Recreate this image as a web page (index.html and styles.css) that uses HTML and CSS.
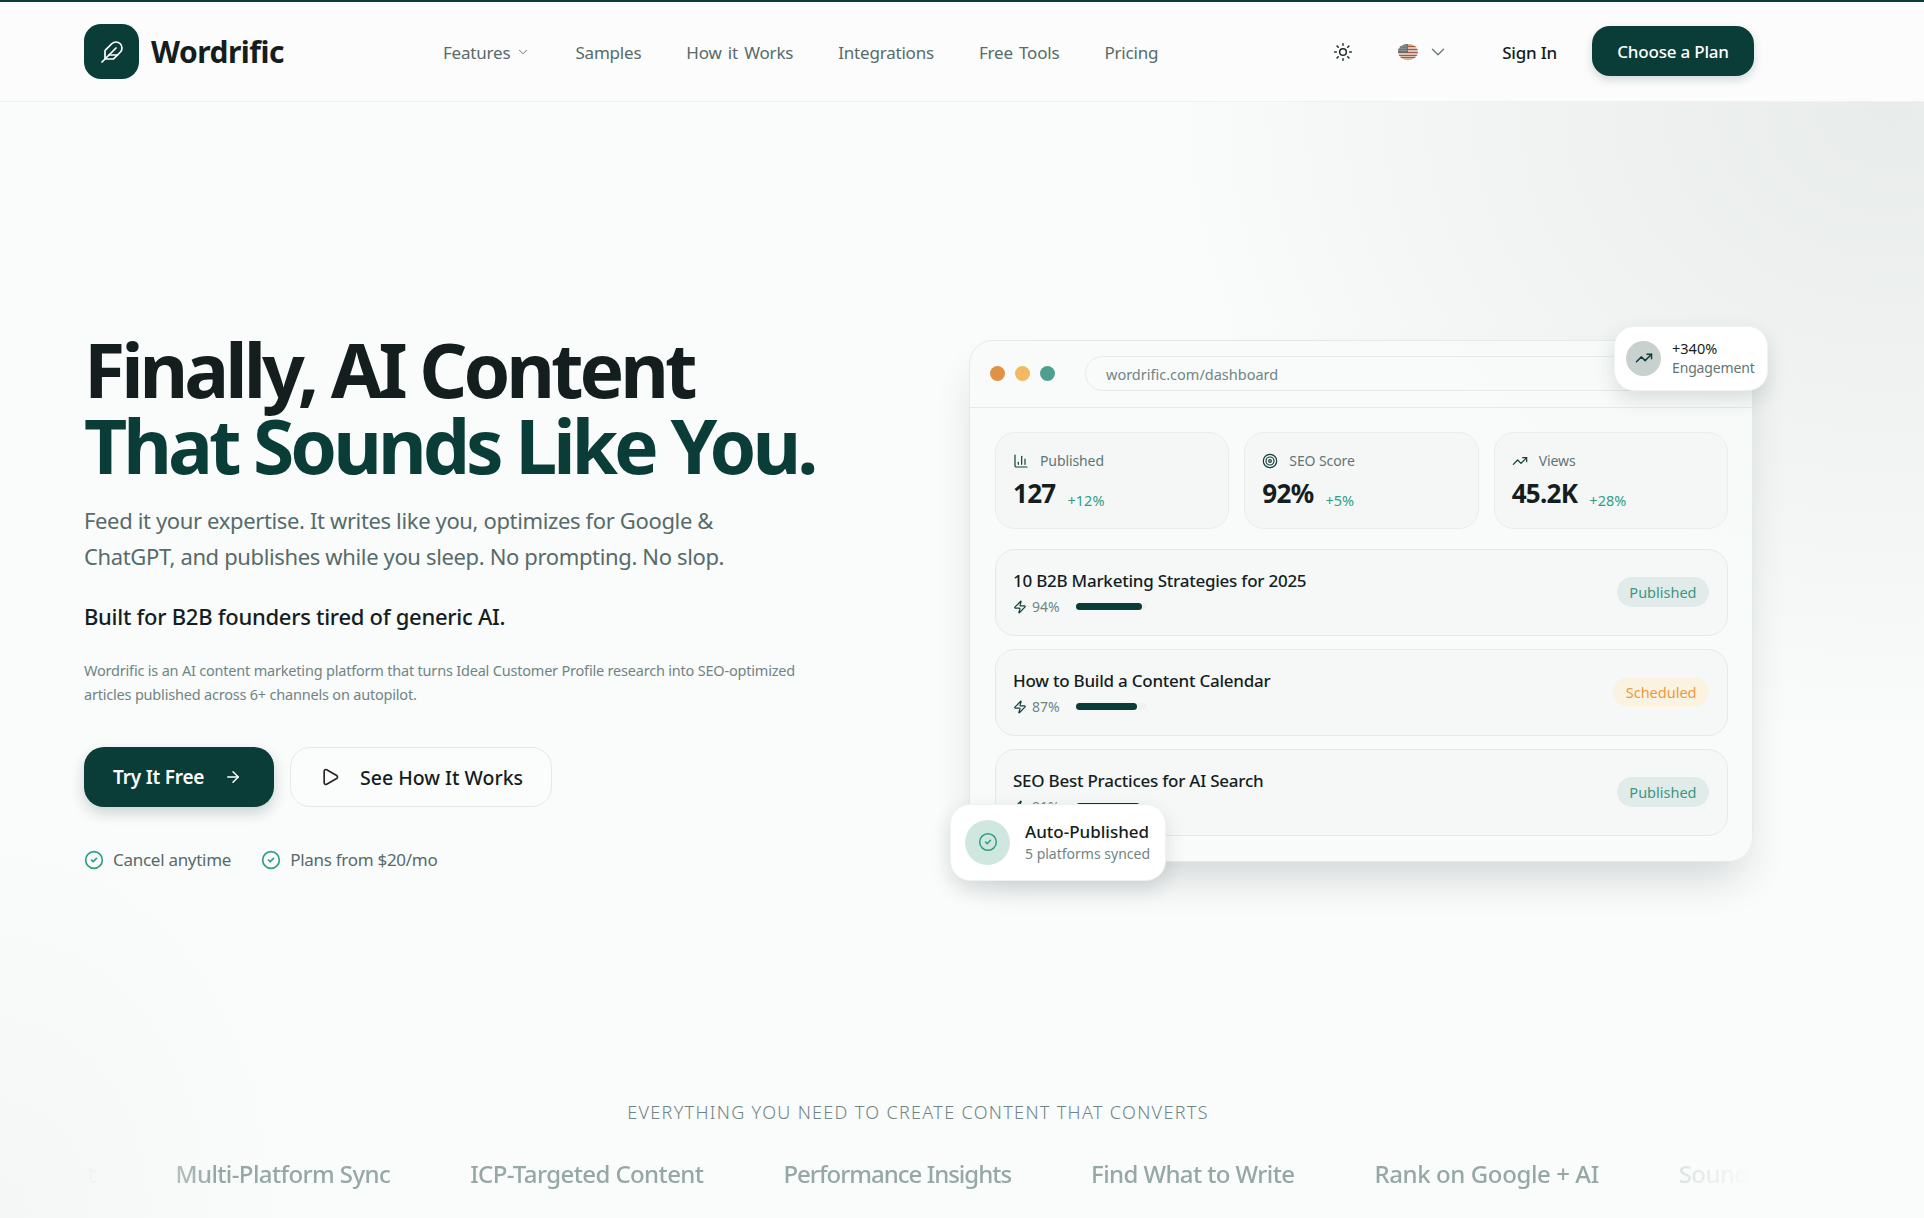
FILE: index.html
```html
<!DOCTYPE html>
<html lang="en">
<head>
<meta charset="utf-8">
<title>Wordrific</title>
<link rel="stylesheet" href="styles.css">
</head>
<body>
<svg class="sprite" aria-hidden="true">
  <symbol id="i-zap" viewBox="0 0 24 24"><path d="M4 14a1 1 0 0 1-.78-1.63l9.9-10.2a.5.5 0 0 1 .86.46l-1.92 6.02A1 1 0 0 0 13 10h7a1 1 0 0 1 .78 1.63l-9.9 10.2a.5.5 0 0 1-.86-.46l1.92-6.02A1 1 0 0 0 11 14z"/></symbol>
  <symbol id="i-check" viewBox="0 0 24 24"><circle cx="12" cy="12" r="10"/><path d="m9 12 2 2 4-4"/></symbol>
  <symbol id="i-trend" viewBox="0 0 24 24"><path d="M16 7h6v6"/><path d="m22 7-8.500 8.500-5-5L2 17"/></symbol>
  <symbol id="i-chev" viewBox="0 0 24 24"><path d="m6 9 6 6 6-6"/></symbol>
</svg>

<header class="topbar">
  <div class="shell topbar-in">
    <a class="brand">
      <span class="brand-mark">
        <svg class="ico ico-feather" viewBox="0 0 24 24"><path d="M12.670 19a2 2 0 0 0 1.416-.588l6.154-6.172a6 6 0 0 0-8.490-8.490L5.586 9.914A2 2 0 0 0 5 11.328V18a1 1 0 0 0 1 1z"/><path d="M16 8 2 22"/><path d="M17.500 15H9"/></svg>
      </span>
      <span class="brand-name">Wordrific</span>
    </a>
    <nav class="nav">
      <a class="nav-link">Features <svg class="ico ico-chev-sm"><use href="#i-chev"/></svg></a>
      <a class="nav-link">Samples</a>
      <a class="nav-link">How it Works</a>
      <a class="nav-link">Integrations</a>
      <a class="nav-link">Free Tools</a>
      <a class="nav-link">Pricing</a>
    </nav>
    <div class="actions">
      <svg class="ico ico-sun" viewBox="0 0 24 24"><circle cx="12" cy="12" r="4"/><path d="M12 2v2"/><path d="M12 20v2"/><path d="m4.930 4.930 1.410 1.410"/><path d="m17.660 17.660 1.410 1.410"/><path d="M2 12h2"/><path d="M20 12h2"/><path d="m6.340 17.660-1.410 1.410"/><path d="m19.070 4.930-1.410 1.410"/></svg>
      <span class="lang">
        <svg class="flag" viewBox="0 0 20 16">
          <rect width="20" height="16" fill="#e9e6e2"/>
          <rect width="20" height="1.500" fill="#cfa77f"/>
          <path d="M0 2.500h20M0 5.500h20M0 8.500h20M0 11.500h20" stroke="#a9563f" stroke-width="1.300"/>
          <path d="M0 13.500h20" stroke="#a9563f" stroke-width="1"/>
          <rect y="14.300" width="20" height="1.700" fill="#cfa77f"/>
          <rect width="10" height="8.500" fill="#5f7077"/>
          <path d="M1.500 2h7M1.500 4.200h7M1.500 6.400h7" stroke="#c4cdd0" stroke-width="1" stroke-dasharray="1 1"/>
        </svg>
        <svg class="ico ico-chev-lg"><use href="#i-chev"/></svg>
      </span>
      <a class="signin">Sign In</a>
      <a class="plan-btn">Choose a Plan</a>
    </div>
  </div>
</header>

<main class="page">
  <section class="shell hero">
    <div class="copy">
      <h1 class="headline">Finally, AI Content<span class="headline-accent">That Sounds Like You.</span></h1>
      <p class="lede">Feed it your expertise. It writes like you, optimizes for Google &amp; ChatGPT, and publishes while you sleep. No prompting. No slop.</p>
      <p class="audience">Built for B2B founders tired of generic AI.</p>
      <p class="blurb">Wordrific is an AI content marketing platform that turns Ideal Customer Profile research into SEO-optimized articles published across 6+ channels on autopilot.</p>
      <div class="cta-row">
        <a class="btn btn-primary">Try It Free <svg class="ico ico-arrow" viewBox="0 0 24 24"><path d="M5 12h14"/><path d="m12 5 7 7-7 7"/></svg></a>
        <a class="btn btn-ghost"><svg class="ico ico-play" viewBox="0 0 24 24"><path d="M5 5a2 2 0 0 1 3.008-1.728l11.997 6.998a2 2 0 0 1 .003 3.458l-12 7A2 2 0 0 1 5 19z"/></svg> See How It Works</a>
      </div>
      <ul class="assure">
        <li class="assure-item"><svg class="ico ico-ok"><use href="#i-check"/></svg>Cancel anytime</li>
        <li class="assure-item"><svg class="ico ico-ok"><use href="#i-check"/></svg>Plans from $20/mo</li>
      </ul>
    </div>

    <div class="dash">
      <div class="dash-bar">
        <span class="dot dot-a"></span><span class="dot dot-b"></span><span class="dot dot-c"></span>
        <span class="url">wordrific.com/dashboard</span>
      </div>
      <div class="dash-body">
        <div class="stats">
          <div class="stat">
            <div class="stat-label"><svg class="ico ico-stat" viewBox="0 0 24 24"><path d="M3 3v16a2 2 0 0 0 2 2h16"/><path d="M18 17V9"/><path d="M13 17V5"/><path d="M8 17v-3"/></svg>Published</div>
            <div class="stat-line"><b class="stat-num">127</b><span class="stat-delta">+12%</span></div>
          </div>
          <div class="stat">
            <div class="stat-label"><svg class="ico ico-stat" viewBox="0 0 24 24"><circle cx="12" cy="12" r="10"/><circle cx="12" cy="12" r="6"/><circle cx="12" cy="12" r="2"/></svg>SEO Score</div>
            <div class="stat-line"><b class="stat-num">92%</b><span class="stat-delta">+5%</span></div>
          </div>
          <div class="stat">
            <div class="stat-label"><svg class="ico ico-stat"><use href="#i-trend"/></svg>Views</div>
            <div class="stat-line"><b class="stat-num">45.2K</b><span class="stat-delta">+28%</span></div>
          </div>
        </div>
        <div class="rows">
          <div class="row">
            <div class="row-main">
              <div class="row-title">10 B2B Marketing Strategies for 2025</div>
              <div class="row-meta"><svg class="ico ico-zap"><use href="#i-zap"/></svg><span class="row-pct">94%</span><span class="track"><span class="fill" style="width:94%"></span></span></div>
            </div>
            <span class="badge badge-pub">Published</span>
          </div>
          <div class="row">
            <div class="row-main">
              <div class="row-title">How to Build a Content Calendar</div>
              <div class="row-meta"><svg class="ico ico-zap"><use href="#i-zap"/></svg><span class="row-pct">87%</span><span class="track"><span class="fill" style="width:87%"></span></span></div>
            </div>
            <span class="badge badge-sched">Scheduled</span>
          </div>
          <div class="row">
            <div class="row-main">
              <div class="row-title">SEO Best Practices for AI Search</div>
              <div class="row-meta"><svg class="ico ico-zap"><use href="#i-zap"/></svg><span class="row-pct">91%</span><span class="track"><span class="fill" style="width:91%"></span></span></div>
            </div>
            <span class="badge badge-pub">Published</span>
          </div>
        </div>
      </div>
      <div class="float float-top">
        <span class="float-ic float-ic-grey"><svg class="ico ico-trend"><use href="#i-trend"/></svg></span>
        <span class="float-txt"><span class="ft-a">+340%</span><span class="ft-b">Engagement</span></span>
      </div>
      <div class="float float-bottom">
        <span class="float-ic float-ic-mint"><svg class="ico ico-okfloat"><use href="#i-check"/></svg></span>
        <span class="float-txt"><span class="fb-a">Auto-Published</span><span class="fb-b">5 platforms synced</span></span>
      </div>
    </div>
  </section>

  <section class="shell strip">
    <h2 class="strip-title">EVERYTHING YOU NEED TO CREATE CONTENT THAT CONVERTS</h2>
    <div class="marquee">
      <div class="marquee-track">
        <span class="mq mq-lead">Publish Direct</span>
        <span class="mq">Multi-Platform Sync</span>
        <span class="mq">ICP-Targeted Content</span>
        <span class="mq mq-tight">Performance Insights</span>
        <span class="mq">Find What to Write</span>
        <span class="mq mq-loose">Rank on Google + AI</span>
        <span class="mq">Sounds Like You</span>
      </div>
    </div>
  </section>
</main>
</body>
</html>
```
FILE: styles.css
```css
* { box-sizing: border-box; }
html, body { margin: 0; padding: 0; }
body {
  width: 1924px;
  height: 1218px;
  overflow: hidden;
  background: #fafbfb;
  color: #141e1e;
  font-family: "Noto Sans", "Open Sans", "Liberation Sans", sans-serif;
}
a { color: inherit; text-decoration: none; }
.sprite { display: none; }
.ico { fill: none; stroke: currentColor; stroke-width: 2; stroke-linecap: round; stroke-linejoin: round; flex: none; display: block; }
.shell { width: 1836px; padding: 0 84px; }

/* header */
.topbar { height: 102px; background: #fcfcfc; border-top: 2px solid #0a3d37; border-bottom: 1px solid #eff1f1; }
.topbar-in { height: 99px; display: flex; align-items: center; position: relative; padding-right: 82px; }
.brand { display: flex; align-items: center; gap: 12px; width: 359px; }
.brand-mark { width: 55px; height: 55px; border-radius: 17px; background: #0a3d37; color: #fff; display: flex; align-items: center; justify-content: center; }
.ico-feather { width: 24px; height: 24px; stroke-width: 1.7; }
.brand-name { font-size: 30px; font-weight: 700; letter-spacing: -0.5px; color: #141e1e; }
.nav { display: flex; align-items: center; gap: 45px; padding-top: 1px; }
.nav-link { display: flex; align-items: center; gap: 6px; font-size: 17px; letter-spacing: -0.2px; word-spacing: 2px; color: #566b6a; white-space: nowrap; }
.ico-chev-sm { width: 14px; height: 14px; stroke-width: 1.6; }
.actions { margin-left: auto; display: flex; align-items: center; color: #141e1e; }
.ico-sun { width: 20px; height: 20px; stroke-width: 1.8; margin-right: 45px; color: #1b2f2e; }
.lang { display: flex; align-items: center; gap: 8.500px; margin-right: 53.500px; }
.flag { width: 20px; height: 16px; border-radius: 10px / 8px; display: block; }
.ico-chev-lg { width: 22px; height: 22px; color: #6c8180; stroke-width: 1.6; }
.signin { font-size: 17px; letter-spacing: -0.2px; margin-right: 35px; font-weight: 500; padding-top: 1px; }
.plan-btn { height: 50px; width: 162px; margin-bottom: 1px; display: flex; align-items: center; justify-content: center; border-radius: 18px; background: #0a3d37; color: #fff; font-size: 17px; font-weight: 500; letter-spacing: -0.2px; box-shadow: 0 4px 10px rgba(10,61,55,.18); }

/* page */
.page { position: relative; height: 1116px; background:
  radial-gradient(ellipse 720px 640px at 1890px 0, #e8ecea 0, rgba(232,236,234,.6) 42%, rgba(250,251,251,0) 100%),
  radial-gradient(ellipse 300px 400px at 0 100%, #f5f7f7 0, rgba(250,251,251,0) 100%),
  #fafbfb; }

/* hero */
.hero { display: grid; grid-template-columns: 784px 784px; column-gap: 101px; align-items: center; padding-top: 229px; }
.headline { margin: 0; font-size: 75px; line-height: 76px; font-weight: 700; letter-spacing: -4px; color: #141e1e; }
.headline-accent { display: block; color: #0a3d37; }
.lede { margin: 19px 0 0; width: 680px; font-size: 22px; line-height: 36px; letter-spacing: -0.36px; color: #566b6a; }
.audience { margin: 25px 0 0; font-size: 22px; line-height: 34px; font-weight: 500; letter-spacing: -0.28px; color: #141e1e; }
.blurb { margin: 26px 0 0; width: 740px; font-size: 14.500px; line-height: 23.500px; letter-spacing: -0.2px; color: #6f8584; }
.cta-row { display: flex; gap: 16px; margin-top: 41px; }
.btn { height: 60px; display: flex; align-items: center; border-radius: 20px; font-size: 19px; font-weight: 600; letter-spacing: -0.2px; }
.btn-primary { width: 190px; padding-left: 29px; gap: 20px; background: #0a3d37; color: #fff; box-shadow: 0 6px 14px rgba(10,61,55,.2); }
.ico-arrow { width: 18px; height: 18px; }
.btn-ghost { width: 262px; padding-left: 29px; gap: 20px; border: 1px solid #e3ebe9; color: #141e1e; font-size: 19.500px; font-weight: 500; letter-spacing: 0; background: #fbfcfc; }
.ico-play { width: 20px; height: 20px; stroke: #2b2423; }
.assure { list-style: none; margin: 40px 0 0; padding: 0; display: flex; gap: 30px; }
.assure-item { display: flex; align-items: center; gap: 9px; font-size: 17px; line-height: 26px; letter-spacing: -0.28px; color: #566b6a; }
.ico-ok { width: 20px; height: 20px; color: #2f9e84; }

/* dashboard */
.dash { position: relative; height: 522px; margin-top: -3px; background: rgba(249,251,250,.8); border: 1px solid #e3ebe9; border-radius: 24px; box-shadow: 0 24px 44px -12px rgba(30,50,48,.2); }
.dash-bar { height: 67px; padding: 0 24px 0 20px; display: flex; align-items: center; gap: 10px; border-bottom: 1px solid #e3ebe9; }
.dot { width: 15px; height: 15px; border-radius: 50%; }
.dot-a { background: #df9145; }
.dot-b { background: #f4b860; }
.dot-c { background: #4f9f8c; }
.url { margin-left: 20px; flex: 1; height: 35px; display: flex; align-items: center; padding-left: 20px; border: 1px solid #e3ebe9; border-radius: 18px; font-size: 14.500px; color: #6f8584; }
.dash-body { padding: 24px 24px 0 25px; }
.stats { display: grid; grid-template-columns: repeat(3, 1fr); gap: 15px; }
.stat { height: 97px; padding: 18px 18px 0 17px; background: #f5f7f7; border: 1px solid #e8eded; border-radius: 20px; }
.stat-label { display: flex; align-items: center; gap: 11px; font-size: 14px; line-height: 20px; letter-spacing: -0.1px; color: #5f7675; }
.ico-stat { width: 16px; height: 16px; color: #0e3f3a; stroke-width: 1.8; }
.stat-line { display: flex; align-items: flex-end; gap: 12px; margin-top: 4px; }
.stat-num { font-size: 26px; line-height: 36px; font-weight: 700; letter-spacing: -0.7px; color: #141e1e; }
.stat-delta { font-size: 14.500px; line-height: 18px; margin-bottom: 1.500px; color: #2f9e84; }
.rows { display: flex; flex-direction: column; gap: 13px; margin-top: 20px; }
.row { height: 87px; padding: 0 18px 0 17px; display: flex; align-items: center; justify-content: space-between; background: #f6f8f8; border: 1px solid #e3ebe9; border-radius: 20px; }
.row-title { font-size: 17px; line-height: 24px; font-weight: 500; letter-spacing: -0.24px; color: #141e1e; }
.row-meta { display: flex; align-items: center; margin-top: 5px; color: #6f8584; font-size: 14px; line-height: 18px; }
.ico-zap { width: 14px; height: 14px; color: #0e3f3a; }
.row-pct { margin-left: 5px; width: 44px; }
.track { width: 70px; height: 7px; border-radius: 4px; background: #eef2f2; display: block; }
.fill { display: block; height: 100%; border-radius: 4px; background: #0a3d37; }
.badge { height: 30px; padding: 0 12.500px; display: flex; align-items: center; border-radius: 15px; font-size: 14.500px; }
.badge-pub { background: #e1ebe9; color: #3e9685; }
.badge-sched { background: #faf3e2; color: #e99a3c; }

/* floating cards */
.float { position: absolute; background: #fff; border-radius: 20px; display: flex; align-items: center; box-shadow: 0 8px 20px rgba(30,50,48,.14); border: 1px solid #eef2f1; }
.float-top { top: -15px; right: -16px; width: 154px; height: 65px; padding-left: 11px; gap: 11px; }
.float-bottom { left: -20px; bottom: -20px; width: 216px; height: 77px; padding-left: 14px; gap: 15px; }
.float-ic { border-radius: 50%; display: flex; align-items: center; justify-content: center; flex: none; }
.float-ic-grey { width: 35px; height: 35px; background: #c9d1cf; color: #0e3f3a; }
.float-ic-mint { width: 45px; height: 45px; background: #cfe7df; color: #2f9e84; }
.ico-trend { width: 18px; height: 18px; }
.ico-okfloat { width: 20px; height: 20px; stroke-width: 1.8; }
.float-txt { display: flex; flex-direction: column; white-space: nowrap; }
.ft-a { font-size: 14.500px; line-height: 20px; color: #141e1e; }
.ft-b { font-size: 14px; line-height: 20px; letter-spacing: -0.15px; color: #5f7675; }
.fb-a { font-size: 17px; line-height: 24px; font-weight: 500; color: #141e1e; }
.fb-b { font-size: 14px; line-height: 20px; color: #6f8584; }

/* strip */
.strip { margin-top: 227px; text-align: center; }
.strip-title { margin: 0; font-size: 18px; line-height: 24px; font-weight: 300; letter-spacing: 1.32px; color: #6f8584; }
.marquee { margin-top: 32px; overflow: hidden; white-space: nowrap; -webkit-mask-image: linear-gradient(90deg, transparent 0, rgba(0,0,0,.7) 92px, #000 130px, #000 calc(100% - 150px), rgba(0,0,0,.28) calc(100% - 72px), transparent 100%); mask-image: linear-gradient(90deg, transparent 0, rgba(0,0,0,.7) 92px, #000 130px, #000 calc(100% - 150px), rgba(0,0,0,.28) calc(100% - 72px), transparent 100%); }
.marquee-track { display: inline-flex; gap: 80px; margin-left: -188.500px; }
.mq { font-size: 24px; line-height: 36px; font-weight: 500; letter-spacing: -0.6px; color: #96a8a5; }
.mq-lead { width: 200px; text-align: right; flex: none; }
.mq-tight { letter-spacing: -1px; }
.mq-loose { letter-spacing: -0.4px; }
```
